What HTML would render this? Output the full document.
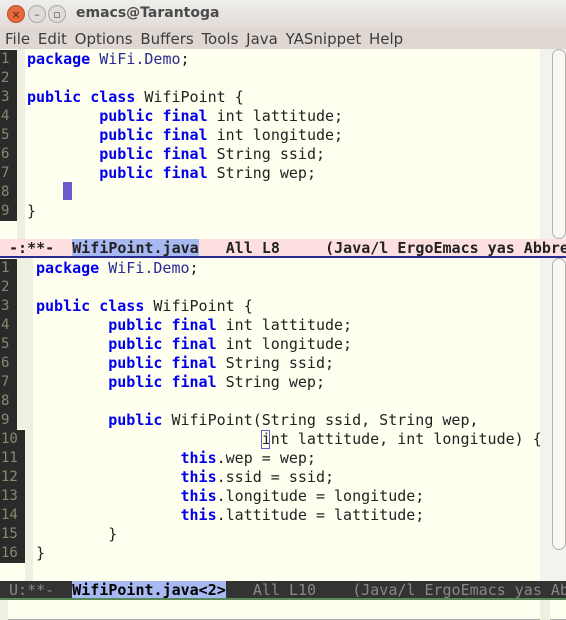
<!DOCTYPE html>
<html><head><meta charset="utf-8"><style>
*{margin:0;padding:0;box-sizing:border-box}
body{width:566px;height:620px;overflow:hidden;background:#fffff0;position:relative;font-family:"DejaVu Sans Mono",monospace;font-size:15px}
.abs{position:absolute}
.title{left:0;top:0;width:566px;height:28px;background:linear-gradient(#efeeec,#e2dcd7)}
.menu{left:0;top:28px;width:566px;height:21px;background:#dfd7d2;font-family:"DejaVu Sans","Liberation Sans",sans-serif;font-size:15px;color:#3c3c3c;line-height:22px;padding-left:5px;word-spacing:3px}
.btn{top:5px;width:18px;height:18px;border-radius:50%;font-size:11px;text-align:center;line-height:17px;font-family:"DejaVu Sans",sans-serif}
.ln{left:0;width:17px;background:#2a2a2a;color:#8a8a70;font-size:14px;line-height:19px;padding-left:1px}
.fr{background:#f0f0e2}
.code{white-space:pre;line-height:19px;color:#222}
.k{color:#0000ee;font-weight:bold}
.t{color:#2a2a90}
.sb{background:#f2f2ef}
.thumb{border:1px solid #b8b0a8;border-radius:7px;background:#f8f8f5}
</style></head><body>
<div class="abs title"></div>
<div class="abs btn" style="left:7px;background:#e8693e;color:#5a2010;border:1px solid #b8502e">×</div>
<div class="abs btn" style="left:28px;background:#e0ddd8;color:#555;border:1px solid #aaa">–</div>
<div class="abs btn" style="left:48px;background:#e0ddd8;color:#555;border:1px solid #aaa">▫</div>
<div class="abs" style="left:76px;top:5px;font-family:'DejaVu Sans',sans-serif;font-weight:bold;font-size:14px;color:#4a4a4a">emacs@Tarantoga</div>
<div class="abs menu">File Edit Options Buffers Tools Java YASnippet Help</div>

<!-- top window -->
<div class="abs fr" style="left:17px;top:49px;width:8px;height:190px"></div>
<div class="abs ln" style="top:50px;height:171px">1<br>2<br>3<br>4<br>5<br>6<br>7<br>8<br>9</div>
<div class="abs code" style="left:27px;top:50px"><span class="k">package</span> <span class="t">WiFi.Demo</span>;

<span class="k">public</span> <span class="k">class</span> WifiPoint {
        <span class="k">public</span> <span class="k">final</span> int lattitude;
        <span class="k">public</span> <span class="k">final</span> int longitude;
        <span class="k">public</span> <span class="k">final</span> String ssid;
        <span class="k">public</span> <span class="k">final</span> String wep;

}</div>
<div class="abs" style="left:63px;top:182px;width:9px;height:18px;background:#6a5acd"></div>
<div class="abs sb" style="left:540px;top:49px;width:26px;height:190px"></div>
<div class="abs thumb" style="left:552px;top:49px;width:14px;height:190px"></div>
<div class="abs code" style="left:0;top:239px;width:566px;height:19px;background:#ffe0e0;border-bottom:2px solid #2a2a90;font-weight:bold;color:#222;line-height:19px;overflow:hidden"> -:**-  <span style="background:#a8b8f0">WifiPoint.java</span>   All L8     (Java/l ErgoEmacs yas Abbrev)</div>

<!-- bottom window -->
<div class="abs fr" style="left:25px;top:258px;width:8px;height:323px"></div>
<div class="abs fr" style="left:17px;top:258px;width:8px;height:171px"></div>
<div class="abs ln" style="top:259px;height:171px">1<br>2<br>3<br>4<br>5<br>6<br>7<br>8<br>9</div>
<div class="abs ln" style="top:430px;height:133px;width:25px">10<br>11<br>12<br>13<br>14<br>15<br>16</div>
<div class="abs code" style="left:36px;top:259px"><span class="k">package</span> <span class="t">WiFi.Demo</span>;

<span class="k">public</span> <span class="k">class</span> WifiPoint {
        <span class="k">public</span> <span class="k">final</span> int lattitude;
        <span class="k">public</span> <span class="k">final</span> int longitude;
        <span class="k">public</span> <span class="k">final</span> String ssid;
        <span class="k">public</span> <span class="k">final</span> String wep;

        <span class="k">public</span> WifiPoint(String ssid, String wep,
                         int lattitude, int longitude) {
                <span class="k">this</span>.wep = wep;
                <span class="k">this</span>.ssid = ssid;
                <span class="k">this</span>.longitude = longitude;
                <span class="k">this</span>.lattitude = lattitude;
        }
}</div>
<div class="abs" style="left:261px;top:430px;width:9px;height:19px;border:1px solid #6a5acd"></div>
<div class="abs sb" style="left:540px;top:258px;width:26px;height:323px"></div>
<div class="abs thumb" style="left:552px;top:258px;width:14px;height:292px"></div>
<div class="abs code" style="left:0;top:581px;width:566px;height:19px;background:#333;border-bottom:2px solid #5a8a5a;color:#888;line-height:19px;overflow:hidden"> U:**-  <span style="background:#a8b8f0;color:#000;font-weight:bold">WifiPoint.java&lt;2&gt;</span>   All L10    (Java/l ErgoEmacs yas Abbrev)</div>
<div class="abs" style="left:0;top:600px;width:566px;height:20px;background:#fffff0;border-bottom:1px solid #aaa"></div>
<div class="abs" style="left:0;top:600px;width:8px;height:20px;background:#f0f0e2"></div>
<div class="abs" style="left:540px;top:600px;width:10px;height:20px;background:#f0f0e2"></div>
</body></html>
